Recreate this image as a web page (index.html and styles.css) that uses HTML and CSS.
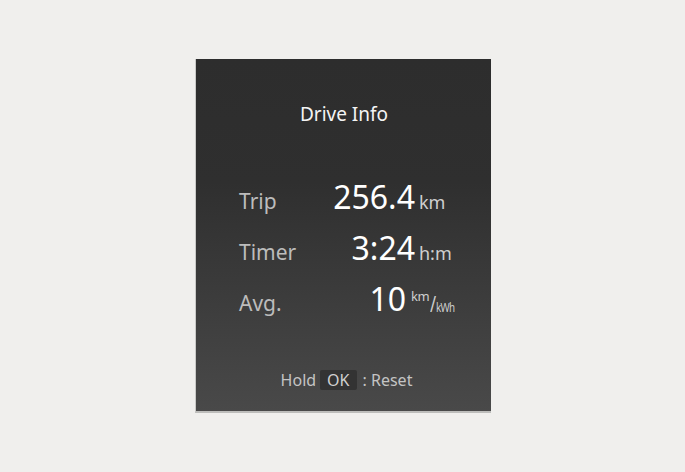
FILE: index.html
```html
<!DOCTYPE html>
<html>
<head>
<meta charset="utf-8">
<link rel="stylesheet" href="styles.css">
</head>
<body>
<div class="panel">
  <div class="title">Drive Info</div>
  <div class="rows">
    <div class="row">
      <span class="label">Trip</span>
      <span class="value">256.4</span>
      <span class="unit">km</span>
    </div>
    <div class="row">
      <span class="label">Timer</span>
      <span class="value">3:24</span>
      <span class="unit">h:m</span>
    </div>
    <div class="row">
      <span class="label">Avg.</span>
      <span class="value value-short">10</span>
      <span class="unit unit-frac"><span class="num">km</span><span class="slash">/</span><span class="den">kWh</span></span>
    </div>
  </div>
  <div class="footer">
    <span class="hold">Hold</span>
    <span class="okbox">OK</span>
    <span class="reset">: Reset</span>
  </div>
</div>
</body>
</html>
```

FILE: styles.css
```css
html, body {
  margin: 0;
  padding: 0;
  background: #f0efed;
}
body {
  width: 685px;
  height: 472px;
  padding: 59px 0 0 195px;
  box-sizing: border-box;
  font-family: "Noto Sans", "DejaVu Sans", sans-serif;
}
.panel {
  width: 295px;
  height: 352px;
  box-sizing: content-box;
  border-left: 1px solid #c9c9c7;
  border-bottom: 2px solid #bdbdbb;
  background: linear-gradient(to bottom, #2d2d2d 0%, #2f2f2f 35%, #3b3b3b 65%, #494949 100%);
  display: flex;
  flex-direction: column;
  color: #fff;
}
.title {
  margin-top: 40px;
  height: 30px;
  line-height: 30px;
  text-align: center;
  font-size: 19px;
  color: #f4f4f4;
  padding-left: 1px;
}
.rows {
  margin-top: 46px;
  padding-left: 43px;
  display: flex;
  flex-direction: column;
  gap: 7px;
}
.row {
  display: grid;
  grid-template-columns: 70px 106px auto;
  align-items: baseline;
  height: 44px;
  line-height: 44px;
}
.label {
  font-size: 21px;
  color: #bcbcbc;
}
.value {
  font-size: 32px;
  text-align: right;
  color: #ffffff;
}
.value-short {
  padding-right: 9px;
}
.unit {
  font-size: 18px;
  color: #cfcfcf;
  padding-left: 4px;
}
.unit-frac {
  padding-left: 0;
  margin-left: -4px;
  display: inline-flex;
  align-items: baseline;
}
.unit-frac .num {
  position: relative;
  top: -10px;
  font-size: 13px;
  letter-spacing: -0.5px;
}
.unit-frac .slash {
  font-size: 22px;
  display: inline-block;
  transform: scaleX(0.75);
  margin: 0 -1px 0 0;
  position: relative;
  top: 1px;
}
.unit-frac .den {
  font-size: 12px;
  letter-spacing: -0.8px;
  display: inline-block;
  transform: scaleX(0.82);
  transform-origin: left;
  position: relative;
  top: 1px;
}
.footer {
  margin-top: auto;
  margin-bottom: 20px;
  display: flex;
  justify-content: center;
  align-items: center;
  font-size: 16px;
  color: #c4c4c4;
  padding-left: 6px;
}
.okbox {
  margin: 0 4px 0 4px;
  background: #333333;
  color: #d0d0d0;
  padding: 0 7px;
  height: 20px;
  line-height: 20px;
  border-radius: 2px;
}
.reset {
  margin-left: 2px;
}
```
